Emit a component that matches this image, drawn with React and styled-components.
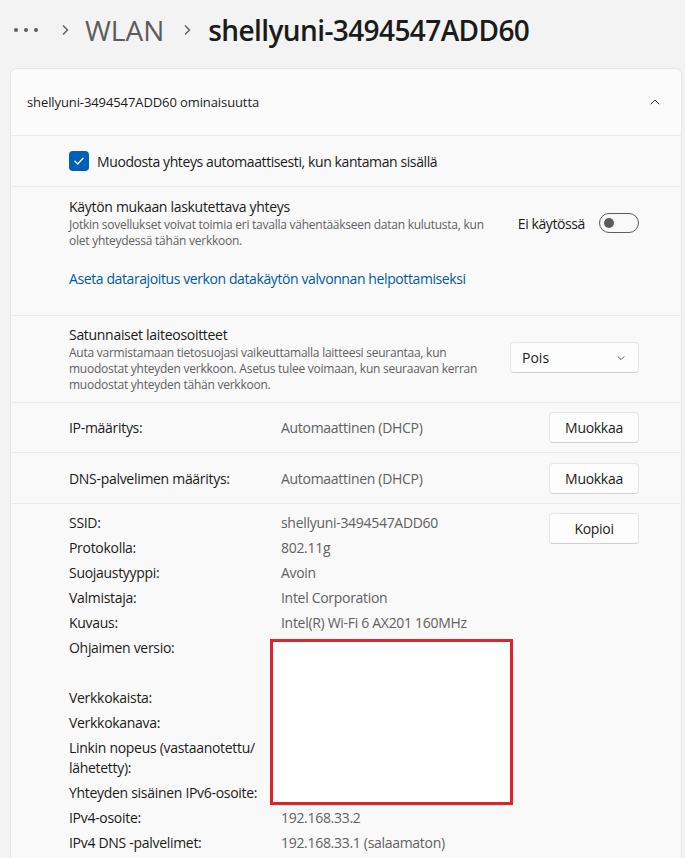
import React from 'react'
import styled, { createGlobalStyle } from 'styled-components'

const GlobalStyle = createGlobalStyle`
  html, body {
    margin: 0;
    background: #f3f3f3;
    font-family: "Open Sans", "Noto Sans", sans-serif;
    color: #1b1b1b;
  }
`

const Page = styled.div`
  width: 685px;
  height: 858px;
  overflow: hidden;
`

const Breadcrumb = styled.div`
  display: flex;
  align-items: center;
  height: 60px;
  padding-left: 14px;
  font-size: 28px;
`

const Dots = styled.span`
  display: flex;
  gap: 6px;
  width: 24px;
  margin-right: 22px;
  span {
    width: 4px;
    height: 4px;
    border-radius: 50%;
    background: #5c5c5c;
  }
`

const Crumb = styled.span`
  color: ${p => (p.current ? '#1b1b1b' : '#5c5c5c')};
  font-weight: ${p => (p.current ? 600 : 500)};
  letter-spacing: ${p => (p.current ? '-0.6px' : '0')};
`

const Sep = styled.svg`
  width: 10px;
  height: 12px;
  margin: 0 ${p => p.first ? '15px' : '16px'} 0 ${p => p.first ? '0' : '18px'};
`

const Card = styled.div`
  margin: 8px 3px 0 10px;
  border: 1px solid #e5e5e5;
  border-radius: 6px 6px 0 0;
  border-bottom: none;
  background: #f9f9f9;
`

const Header = styled.div`
  display: flex;
  align-items: center;
  justify-content: space-between;
  height: 66px;
  padding: 0 20px 0 16px;
  background: #fbfbfb;
  border-radius: 6px 6px 0 0;
  font-size: 13px;
  letter-spacing: -0.1px;
`

const Section = styled.div`
  display: flex;
  align-items: ${p => p.top ? 'flex-start' : 'center'};
  gap: ${p => p.gap || '16px'};
  border-top: 1px solid #ebebeb;
  padding: ${p => p.pad || '0'} 42px ${p => p.padBottom || p.pad || '0'} 58px;
  min-height: ${p => p.h || 'auto'};
  box-sizing: border-box;
`

const Check = styled.span`
  width: 20px;
  height: 20px;
  border-radius: 4px;
  background: #005fb8;
  display: flex;
  align-items: center;
  justify-content: center;
  margin-right: -8px;
`

const Label = styled.span`
  font-size: 14px;
  letter-spacing: -0.4px;
`

const Info = styled.div`
  flex: 1;
  display: flex;
  flex-direction: column;
`

const Title = styled.div`
  font-size: 14px;
  line-height: 20px;
  letter-spacing: -0.3px;
`

const Desc = styled.div`
  font-size: 12px;
  line-height: 16px;
  letter-spacing: -0.25px;
  color: #616161;
  max-width: ${p => p.w || 'none'};
`

const Link = styled.a`
  font-size: 14px;
  letter-spacing: -0.4px;
  color: #005a9e;
  margin-top: 20px;
  text-decoration: none;
`

const Right = styled.div`
  display: flex;
  align-items: center;
  gap: 14px;
  margin-top: ${p => p.mt || '0'};
`

const Toggle = styled.span`
  width: 40px;
  height: 20px;
  box-sizing: border-box;
  border: 1px solid #5c5c5c;
  border-radius: 10px;
  position: relative;
  &::after {
    content: '';
    position: absolute;
    left: 4px;
    top: 4px;
    width: 10px;
    height: 10px;
    border-radius: 50%;
    background: #5c5c5c;
  }
`

const Select = styled.div`
  width: 129px;
  height: 31px;
  box-sizing: border-box;
  display: flex;
  align-items: center;
  justify-content: space-between;
  padding: 0 12px 0 11px;
  background: #fdfdfd;
  border: 1px solid #e5e5e5;
  border-bottom-color: #d0d0d0;
  border-radius: 4px;
  font-size: 14px;
  margin-top: -3px;
`

const Button = styled.button`
  width: 90px;
  height: 31px;
  flex-shrink: 0;
  background: #fdfdfd;
  border: 1px solid #e5e5e5;
  border-bottom-color: #d0d0d0;
  border-radius: 4px;
  font-family: inherit;
  font-size: 14px;
  letter-spacing: -0.3px;
  color: #1b1b1b;
`

const Key = styled.div`
  width: 212px;
  flex-shrink: 0;
  font-size: 14px;
  letter-spacing: -0.3px;
`

const Value = styled.div`
  flex: 1;
  font-size: 14px;
  letter-spacing: -0.3px;
  color: #616161;
`

const Details = styled.div`
  display: flex;
  align-items: flex-start;
  border-top: 1px solid #ebebeb;
  padding: 9px 42px 20px 58px;
  position: relative;
`

const Grid = styled.div`
  flex: 1;
  display: grid;
  grid-template-columns: 212px 1fr;
  row-gap: 5px;
  font-size: 14px;
  line-height: 20px;
  letter-spacing: -0.3px;
  span:nth-child(even) {
    color: #616161;
  }
`

const Hidden = styled.span`
  height: ${p => p.h}px;
`

const Redact = styled.div`
  position: absolute;
  left: 259px;
  top: 135px;
  width: 243px;
  height: 166px;
  box-sizing: border-box;
  border: 3px solid #d9252b;
  background: #ffffff;
`

const Chevron = ({ d, w = 12 }) => (
  <svg width={w} height={w} viewBox="0 0 12 12" fill="none" stroke="#3c3c3c" strokeWidth="1" strokeLinecap="round" strokeLinejoin="round">
    <path d={d} />
  </svg>
)

const details = [
  ['SSID:', 'shellyuni-3494547ADD60'],
  ['Protokolla:', '802.11g'],
  ['Suojaustyyppi:', 'Avoin'],
  ['Valmistaja:', 'Intel Corporation'],
  ['Kuvaus:', 'Intel(R) Wi-Fi 6 AX201 160MHz'],
  ['Ohjaimen versio:', null, 45],
  ['Verkkokaista:', null],
  ['Verkkokanava:', null],
  ['Linkin nopeus (vastaanotettu/ lähetetty):', null],
  ['Yhteyden sisäinen IPv6-osoite:', null],
  ['IPv4-osoite:', '192.168.33.2'],
  ['IPv4 DNS -palvelimet:', '192.168.33.1 (salaamaton)'],
]

export default function App() {
  return (
    <Page>
      <GlobalStyle />
      <Breadcrumb>
        <Dots><span /><span /><span /></Dots>
        <Sep first viewBox="0 0 10 12"><path d="M3 1.5 L7.5 6 L3 10.5" stroke="#5c5c5c" strokeWidth="1.4" fill="none" /></Sep>
        <Crumb>WLAN</Crumb>
        <Sep viewBox="0 0 10 12"><path d="M3 1.5 L7.5 6 L3 10.5" stroke="#5c5c5c" strokeWidth="1.4" fill="none" /></Sep>
        <Crumb current>shellyuni-3494547ADD60</Crumb>
      </Breadcrumb>

      <Card>
        <Header>
          <span>shellyuni-3494547ADD60 ominaisuutta</span>
          <Chevron d="M2 8 L6 4 L10 8" />
        </Header>

        <Section h="51px">
          <Check>
            <svg width="12" height="12" viewBox="0 0 12 12" fill="none" stroke="#fff" strokeWidth="1.3" strokeLinecap="round" strokeLinejoin="round">
              <path d="M2 6.3 L4.8 9 L10 3.2" />
            </svg>
          </Check>
          <Label>Muodosta yhteys automaattisesti, kun kantaman sisällä</Label>
        </Section>

        <Section top pad="10px" padBottom="27px">
          <Info>
            <Title>Käytön mukaan laskutettava yhteys</Title>
            <Desc w="432px">Jotkin sovellukset voivat toimia eri tavalla vähentääkseen datan kulutusta, kun olet yhteydessä tähän verkkoon.</Desc>
            <Link href="#">Aseta datarajoitus verkon datakäytön valvonnan helpottamiseksi</Link>
          </Info>
          <Right mt="16px">
            <Label>Ei käytössä</Label>
            <Toggle />
          </Right>
        </Section>

        <Section h="87px">
          <Info>
            <Title>Satunnaiset laiteosoitteet</Title>
            <Desc w="420px">Auta varmistamaan tietosuojasi vaikeuttamalla laitteesi seurantaa, kun muodostat yhteyden verkkoon. Asetus tulee voimaan, kun seuraavan kerran muodostat yhteyden tähän verkkoon.</Desc>
          </Info>
          <Select>
            <span>Pois</span>
            <Chevron w={10} d="M2.5 4.5 L6 8 L9.5 4.5" />
          </Select>
        </Section>

        <Section h="50px" gap="0">
          <Key>IP-määritys:</Key>
          <Value>Automaattinen (DHCP)</Value>
          <Button>Muokkaa</Button>
        </Section>

        <Section h="51px" gap="0">
          <Key>DNS-palvelimen määritys:</Key>
          <Value>Automaattinen (DHCP)</Value>
          <Button>Muokkaa</Button>
        </Section>

        <Details>
          <Grid>
            {details.map(([k, v, h]) => (
              <React.Fragment key={k}>
                <span>{k}</span>
                {h ? <Hidden h={h} /> : <span>{v}</span>}
              </React.Fragment>
            ))}
          </Grid>
          <Button>Kopioi</Button>
          <Redact />
        </Details>
      </Card>
    </Page>
  )
}
